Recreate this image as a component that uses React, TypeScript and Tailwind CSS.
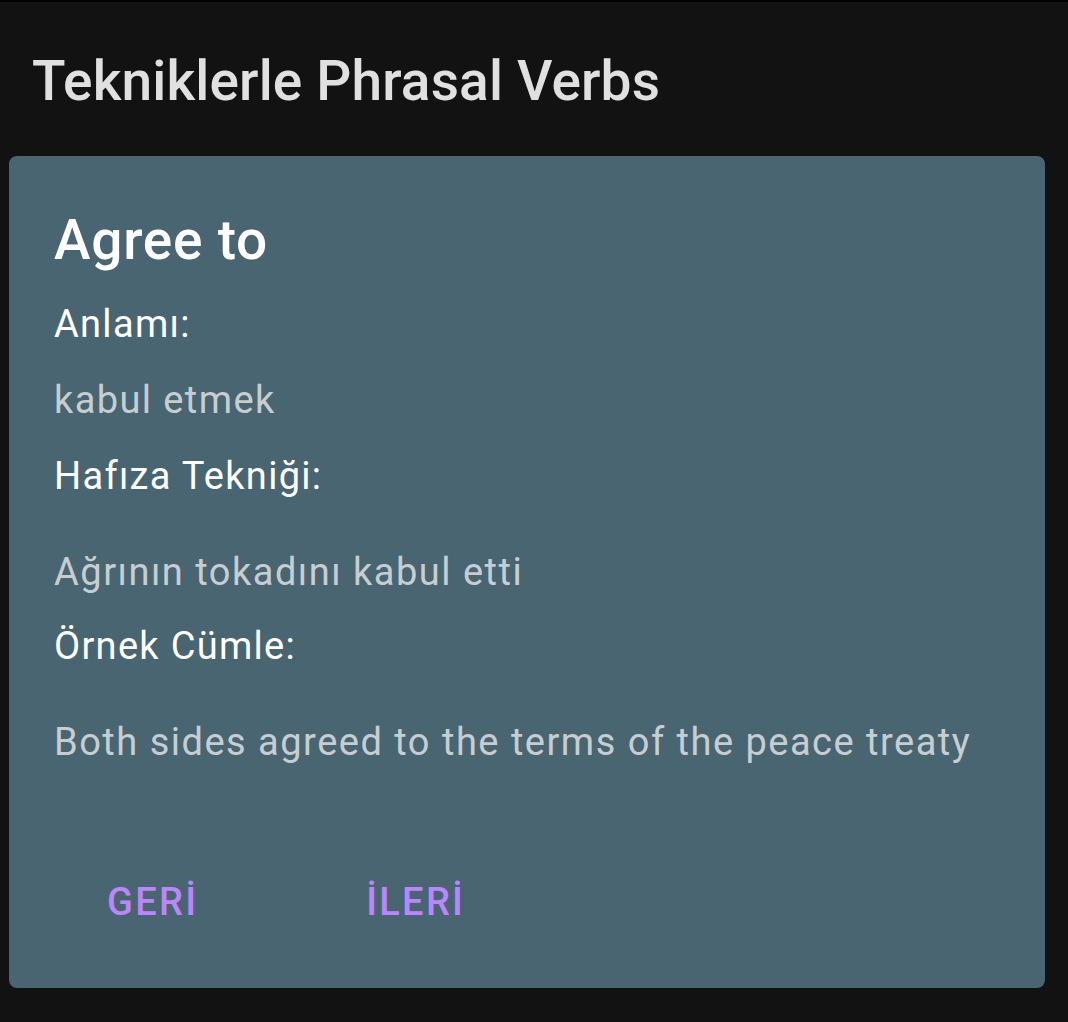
import React from 'react'

const font = { fontFamily: 'Roboto, "Noto Sans", sans-serif' }

export default function App() {
  return (
    <div className="min-h-[1022px] bg-[#121212] border-t-2 border-black" style={font}>
      <h1 className="pl-[32px] pt-[52px] text-[55px] leading-none font-medium tracking-[0.15px] text-[#e0e0e0]">
        Tekniklerle Phrasal Verbs
      </h1>

      <div className="ml-[9px] mr-[23px] mt-[47px] h-[832px] rounded-lg bg-[#4a6572] pl-[45px] pr-6 pt-[57px] flex flex-col">
        <h2 className="text-[55px] leading-none font-medium tracking-[0.75px] text-white">Agree to</h2>

        <div className="mt-[37px] flex flex-col gap-[38px]">
          <p className="text-[38px] leading-none tracking-[1.3px] text-white">Anlamı:</p>
          <p className="text-[38px] leading-none tracking-[1.4px] text-white/70">kabul etmek</p>
          <p className="text-[38px] leading-none tracking-[1.3px] text-white">Hafıza Tekniği:</p>
        </div>
        <p className="mt-[58px] text-[38px] leading-none tracking-[1.5px] text-white/70">
          Ağrının tokadını kabul etti
        </p>
        <p className="mt-[36px] text-[38px] leading-none tracking-[1.3px] text-white">Örnek Cümle:</p>
        <p className="mt-[58px] text-[38px] leading-none tracking-[1.5px] text-white/70">
          Both sides agreed to the terms of the peace treaty
        </p>

        <div className="mt-[122px] flex items-center">
          <button className="ml-[53px] text-[38px] leading-none font-medium tracking-[2.3px] text-[#bb86fc]">
            GERİ
          </button>
          <button className="ml-[168px] text-[38px] leading-none font-medium tracking-[2.3px] text-[#bb86fc]">
            İLERİ
          </button>
        </div>
      </div>
    </div>
  )
}
